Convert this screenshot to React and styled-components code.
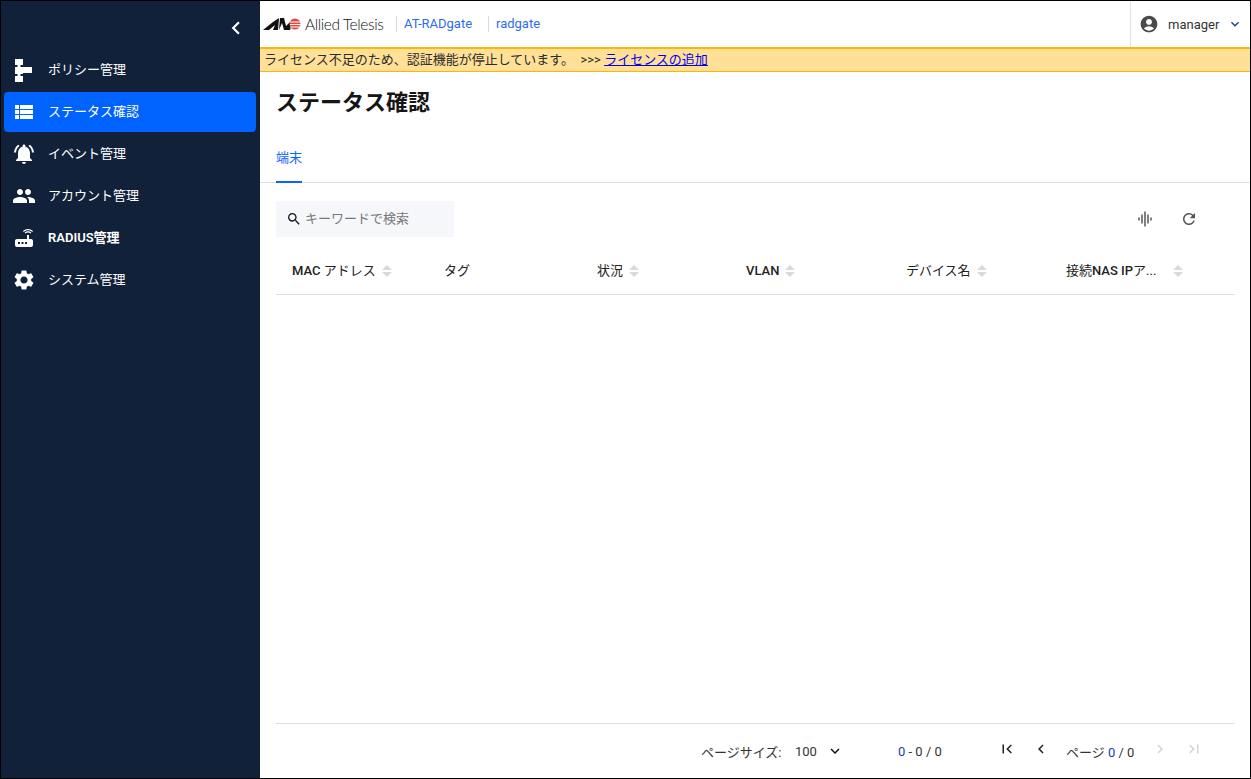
import React from 'react';
import styled, { createGlobalStyle } from 'styled-components';
import {
  MdAccountCircle,
  MdChevronLeft,
  MdChevronRight,
  MdFirstPage,
  MdGraphicEq,
  MdKeyboardArrowDown,
  MdLastPage,
  MdNotificationsActive,
  MdPeople,
  MdRefresh,
  MdRouter,
  MdSearch,
  MdSettings,
  MdViewList,
} from 'react-icons/md';

const GlobalStyle = createGlobalStyle`
  html, body {
    margin: 0;
    padding: 0;
    background: white;
  }
  * {
    box-sizing: border-box;
  }
  body {
    font-family: Roboto, "Noto Sans CJK JP", sans-serif;
    color: #161616;
  }
`;

const Page = styled.div`
  display: flex;
  height: 100vh;
  border: 1px solid #000;
  overflow: hidden;
`;

const Sidebar = styled.nav`
  width: 259px;
  flex-shrink: 0;
  background: #12213a;
  padding: 0 3px;
  display: flex;
  flex-direction: column;
  gap: 2px;
`;

const Collapse = styled.div`
  height: 47px;
  display: flex;
  align-items: flex-start;
  justify-content: flex-end;
  padding: 14px 8px 0 0;
  color: white;
  font-size: 26px;
  svg {
    display: block;
  }
`;

const MenuItem = styled.div`
  height: 40px;
  width: 252px;
  border-radius: 4px;
  display: flex;
  align-items: center;
  padding-left: 8px;
  gap: 12px;
  color: white;
  background: ${props => (props.$active ? '#0062ff' : 'transparent')};
`;

const MenuIcon = styled.span`
  width: 24px;
  height: 24px;
  display: flex;
  align-items: center;
  justify-content: center;
  font-size: 26px;
`;

const MenuLabel = styled.span`
  font-weight: ${props => (props.$bold ? 600 : 400)};
  font-size: 13px;
  padding-bottom: 4px;
`;

const Main = styled.div`
  flex: 1;
  min-width: 0;
  display: flex;
  flex-direction: column;
`;

const TopBar = styled.header`
  height: 46px;
  display: flex;
  align-items: center;
  padding-left: 3px;
  flex-shrink: 0;
`;

const Brand = styled.div`
  display: flex;
  align-items: center;
  gap: 4px;
  width: 133px;
`;

const BrandName = styled.span`
  font-family: Lato, sans-serif;
  font-weight: 300;
  font-size: 15.5px;
  letter-spacing: -0.4px;
  color: #111;
  white-space: nowrap;
`;

const Crumb = styled.span`
  font-size: 13px;
  color: #2f6bf0;
  border-left: 1px solid #d8d8d8;
  height: 16px;
  line-height: 16px;
  padding-left: 7px;
  width: ${props => props.$width}px;
`;

const UserMenu = styled.div`
  margin-left: auto;
  width: 120px;
  height: 100%;
  border-left: 1px solid #e0e0e0;
  display: flex;
  align-items: center;
  padding-left: 8px;
  font-size: 13px;
  color: #333;
`;

const UserName = styled.span`
  margin-left: 9px;
  width: 59px;
`;

const Banner = styled.div`
  height: 25px;
  flex-shrink: 0;
  background: #ffe096;
  border-top: 2px solid #f5b80f;
  border-bottom: 1px solid #f5b80f;
  display: flex;
  align-items: center;
  padding: 0 0 4px 4px;
  font-size: 13px;
  color: #2b2b2b;
  white-space: pre;

  a {
    color: #0000ee;
    text-decoration: underline;
  }
`;

const Title = styled.h1`
  margin: 0;
  padding: 17px 16px 0;
  height: 64px;
  font-size: 22px;
  line-height: 28px;
  font-weight: 700;
  color: #161616;
  flex-shrink: 0;
`;

const Tabs = styled.div`
  height: 47px;
  flex-shrink: 0;
  border-bottom: 1px solid #e0e0e0;
  padding-left: 16px;
  display: flex;
`;

const Tab = styled.div`
  height: 47px;
  padding-top: 13px;
  font-size: 13px;
  line-height: 18px;
  color: #0f62fe;
  border-bottom: 2px solid #0f62fe;
`;

const Toolbar = styled.div`
  display: flex;
  align-items: center;
  justify-content: space-between;
  margin-top: 18px;
  padding: 0 52px 0 16px;
  flex-shrink: 0;
`;

const Search = styled.div`
  width: 178px;
  height: 36px;
  background: #f5f7fb;
  border-radius: 2px;
  display: flex;
  align-items: center;
  padding-left: 10px;
  gap: 3px;
  font-size: 13px;
  color: #777;
  svg {
    color: #161616;
    font-size: 16px;
  }
`;

const Placeholder = styled.span`
  padding-bottom: 4px;
`;

const ToolIcons = styled.div`
  display: flex;
  align-items: center;
  gap: 26px;
  color: #555;
  font-size: 18px;
  svg {
    display: block;
  }
`;

const HeaderRow = styled.div`
  margin: 11px 15px 0 16px;
  height: 47px;
  flex-shrink: 0;
  border-bottom: 1px solid #e0e0e0;
  display: grid;
  grid-template-columns: 152px 153px 149px 160px 160px 185px;
  align-items: center;
`;

const HeaderCell = styled.div`
  padding-left: 16px;
  display: flex;
  align-items: center;
  font-size: 13px;
  color: #222;
`;

const CellText = styled.span`
  width: ${props => (props.$width ? `${props.$width}px` : 'auto')};
  padding-bottom: ${props => (props.$latin ? '2px' : '4px')};
  white-space: nowrap;
`;

const Latin = styled.span`
  font-weight: 500;
`;

const SortIcon = styled.span`
  display: flex;
  flex-direction: column;
  gap: 2px;
  margin-left: 6px;

  &::before,
  &::after {
    content: '';
    width: 0;
    height: 0;
    border-left: 5.5px solid transparent;
    border-right: 5.5px solid transparent;
  }
  &::before {
    border-bottom: 5px solid #d9d9d9;
  }
  &::after {
    border-top: 5px solid #d9d9d9;
  }
`;

const Footer = styled.footer`
  margin: auto 15px 0 16px;
  height: 55px;
  flex-shrink: 0;
  border-top: 1px solid #e0e0e0;
  display: flex;
  align-items: center;
  font-size: 13px;
  color: #333;
  padding-left: 425px;
`;

const PageSize = styled.span`
  width: 94px;
  white-space: nowrap;
`;

const SizeValue = styled.span`
  width: 31px;
`;

const SizeCaret = styled(MdKeyboardArrowDown)`
  font-size: 18px;
  color: #111;
`;

const Range = styled.span`
  margin-left: 54px;
  width: 92px;
  color: #333;
  em {
    color: #0f3fb0;
    font-style: normal;
  }
`;

const PagerButton = styled.span`
  width: 34px;
  display: flex;
  justify-content: center;
  margin-top: -4px;
  font-size: 18px;
  color: ${props => (props.$disabled ? '#d4d4d4' : '#222')};
`;

const PageLabel = styled.span`
  width: 85px;
  padding-left: 8px;
  white-space: nowrap;
  em {
    color: #0f3fb0;
    font-style: normal;
  }
`;

const PolicyIcon = () => (
  <svg width="18" height="23" viewBox="0 0 18 23" fill="white">
    <rect x="0" y="0" width="8" height="6" />
    <rect x="2.5" y="6" width="3" height="2" />
    <rect x="0" y="8" width="8" height="7" />
    <rect x="8" y="8" width="9" height="6" />
    <rect x="2.5" y="15" width="3" height="2" />
    <rect x="0" y="17" width="8" height="6" />
  </svg>
);

const LogoMark = () => (
  <svg width="38" height="14" viewBox="0 0 38 14">
    <polygon points="0,13 10,5 16,1 15,13 10,13 12,8 6,13" fill="#111" />
    <polygon points="17,1 21,1 23,9 28,4 31,2 27,13 21,13 19,6 16,13" fill="#111" />
    <circle cx="32" cy="7" r="5.5" fill="#e3473f" />
    <rect x="27" y="4.5" width="11" height="1" fill="white" />
    <rect x="27" y="7" width="11" height="1" fill="white" />
    <rect x="27" y="9.5" width="11" height="1" fill="white" />
  </svg>
);

const menu = [
  { label: 'ポリシー管理', icon: <PolicyIcon /> },
  { label: 'ステータス確認', icon: <MdViewList />, active: true },
  { label: 'イベント管理', icon: <MdNotificationsActive /> },
  { label: 'アカウント管理', icon: <MdPeople /> },
  { label: 'RADIUS管理', icon: <MdRouter />, bold: true },
  { label: 'システム管理', icon: <MdSettings /> },
];

const columns = [
  { key: 'mac', label: <><Latin>MAC</Latin> アドレス</>, sort: true },
  { key: 'tag', label: 'タグ' },
  { key: 'status', label: '状況', sort: true },
  { key: 'vlan', label: <Latin>VLAN</Latin>, sort: true, latin: true },
  { key: 'device', label: 'デバイス名', sort: true },
  { key: 'nas', label: <>接続<Latin>NAS IP</Latin>ア...</>, sort: true, width: 101 },
];

const App = () => {
  return (
    <>
      <GlobalStyle />
      <Page>
        <Sidebar>
          <Collapse>
            <MdChevronLeft />
          </Collapse>
          {menu.map(item => (
            <MenuItem key={item.label} $active={item.active}>
              <MenuIcon>{item.icon}</MenuIcon>
              <MenuLabel $bold={item.bold}>{item.label}</MenuLabel>
            </MenuItem>
          ))}
        </Sidebar>
        <Main>
          <TopBar>
            <Brand>
              <LogoMark />
              <BrandName>Allied Telesis</BrandName>
            </Brand>
            <Crumb $width={92}>AT-RADgate</Crumb>
            <Crumb $width={70}>radgate</Crumb>
            <UserMenu>
              <MdAccountCircle size={20} color="#4a4a4a" />
              <UserName>manager</UserName>
              <MdKeyboardArrowDown size={16} color="#1d3b8f" />
            </UserMenu>
          </TopBar>
          <Banner>
            ライセンス不足のため、認証機能が停止しています。  &gt;&gt;&gt; <a href="#license">ライセンスの追加</a>
          </Banner>
          <Title>ステータス確認</Title>
          <Tabs>
            <Tab>端末</Tab>
          </Tabs>
          <Toolbar>
            <Search>
              <MdSearch />
              <Placeholder>キーワードで検索</Placeholder>
            </Search>
            <ToolIcons>
              <MdGraphicEq />
              <MdRefresh />
            </ToolIcons>
          </Toolbar>
          <HeaderRow>
            {columns.map(col => (
              <HeaderCell key={col.key}>
                <CellText $width={col.width} $latin={col.latin}>{col.label}</CellText>
                {col.sort && <SortIcon />}
              </HeaderCell>
            ))}
          </HeaderRow>
          <Footer>
            <PageSize>ページサイズ:</PageSize>
            <SizeValue>100</SizeValue>
            <SizeCaret />
            <Range>
              <em>0</em> - 0 / 0
            </Range>
            <PagerButton>
              <MdFirstPage />
            </PagerButton>
            <PagerButton>
              <MdChevronLeft />
            </PagerButton>
            <PageLabel>
              ページ <em>0</em> / 0
            </PageLabel>
            <PagerButton $disabled>
              <MdChevronRight />
            </PagerButton>
            <PagerButton $disabled>
              <MdLastPage />
            </PagerButton>
          </Footer>
        </Main>
      </Page>
    </>
  );
};

export default App;
